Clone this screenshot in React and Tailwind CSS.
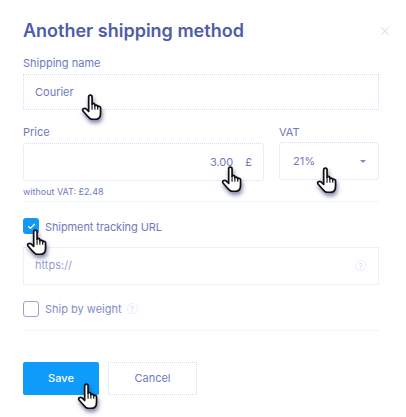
import { Check, X } from "lucide-react";

function Hand({ className }) {
  return (
    <svg
      className={`absolute z-10 drop-shadow-[1px_3px_2px_rgba(50,50,110,0.6)] ${className}`}
      width="23"
      height="26"
      viewBox="0 0 18 23"
      fill="none"
    >
      <path
        d="M6.5 2.5C6.5 0.5 9.5 0.5 9.5 2.5V9C9.5 8 12 8 12 9.5V10.5C12 9.5 14.5 9.5 14.5 11V11.5C14.5 10.5 17 10.5 17 12V17C17 20 15.5 22.5 12 22.5H10C7.5 22.5 6.5 21 5 19L1.5 15C0.5 13.5 2.5 12 4 13L6.5 15.5Z"
        fill="#fff"
        stroke="#111"
        strokeWidth="1.5"
        strokeLinejoin="round"
      />
      <path d="M9.5 9V14M12 10V14M14.5 11.5V14" stroke="#111" strokeWidth="1" />
    </svg>
  );
}

function Help({ className }) {
  return (
    <span className={`flex items-center justify-center rounded-full border border-dotted border-[#d5daf9] text-[8px] leading-none text-[#d5daf9] ${className}`}>
      ?
    </span>
  );
}

export default function App() {
  return (
    <div className="relative h-[417px] w-[406px] overflow-hidden bg-white pt-[19px] pr-[27px] pl-[23px] font-['Inter',sans-serif] text-[#6f79bd]">
      <div className="flex items-center justify-between">
        <h1 className="text-[18px] leading-[24px] font-semibold text-[#4f5da8]">
          Another shipping method
        </h1>
        <X size={14} className="mr-[-13px] text-[#dfe3fb]" />
      </div>

      <div className="mt-[14px] text-[11px] leading-[13px]">Shipping name</div>
      <div className="mt-[4px] flex h-[36px] items-center border border-dotted border-[#d5d9fc] px-[11px] text-[11px]">
        Courier
      </div>

      <div className="mt-[16px] flex gap-[15px]">
        <div className="w-[241px]">
          <div className="text-[11px] leading-[13px]">Price</div>
          <div className="mt-[4px] flex h-[38px] items-center justify-end gap-[12px] rounded-[3px] border border-dotted border-[#d5d9fc] pr-[11px] text-[11px]">
            <span>3.00</span>
            <span>£</span>
          </div>
        </div>
        <div className="flex-1">
          <div className="text-[11px] leading-[13px]">VAT</div>
          <div className="mt-[3px] flex h-[38px] items-center justify-between rounded-[3px] border border-dotted border-[#d5d9fc] pr-[12px] pl-[13px] text-[11px]">
            <span>21%</span>
            <span className="h-0 w-0 border-x-[3px] border-t-[3px] border-x-transparent border-t-[#7f89c4]" />
          </div>
        </div>
      </div>
      <div className="mt-[5px] text-[9px] leading-[11px]">without VAT: £2.48</div>
      <div className="mt-[4px] border-t border-dotted border-[#d8f3fb]" />

      <div className="mt-[16px] flex items-center gap-[6px]">
        <span className="flex h-[16px] w-[16px] items-center justify-center rounded-[3px] bg-[#1399f5]">
          <Check size={9} strokeWidth={3} className="text-white" />
        </span>
        <span className="translate-y-[1px] text-[11px] tracking-[-0.1px]">Shipment tracking URL</span>
      </div>
      <div className="mt-[12px] flex h-[38px] items-center justify-between border border-dotted border-[#dfe2fb] pr-[12px] pl-[11px] text-[11px] text-[#959dd2]">
        <span>https://</span>
        <Help className="h-[11px] w-[11px]" />
      </div>

      <div className="mt-[16px] flex items-center gap-[6px]">
        <span className="h-[16px] w-[16px] rounded-[3px] border border-[#98a3cf]" />
        <span className="text-[11px] text-[#838dc7]">Ship by weight</span>
        <Help className="ml-[-1px] h-[11px] w-[11px]" />
      </div>
      <div className="mt-[13px] border-t border-dotted border-[#d8f3fb]" />

      <div className="mt-[31px] flex gap-[9px]">
        <button className="h-[33px] w-[76px] rounded-[2px] bg-[#0f9bfa] text-[11px] font-medium text-white">
          Save
        </button>
        <button className="h-[33px] w-[89px] border border-dotted border-[#d5d9fc] text-[11px]">
          Cancel
        </button>
      </div>

      <Hand className="top-[94px] left-[80px]" />
      <Hand className="top-[166px] left-[220px]" />
      <Hand className="top-[167px] left-[315px]" />
      <Hand className="top-[229px] left-[25px]" />
      <Hand className="top-[383px] left-[76px]" />
    </div>
  );
}
